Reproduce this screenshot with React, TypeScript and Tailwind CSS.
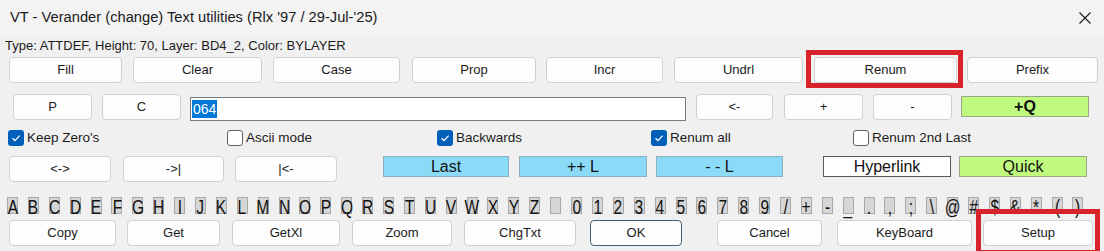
const chars = [
  "A", "B", "C", "D", "E", "F", "G", "H", "I", "J", "K", "L", "M", "N", "O", "P", "Q", "R", "S", "T", "U", "V", "W", "X", "Y", "Z",
  "", "0", "1", "2", "3", "4", "5", "6", "7", "8", "9", "/", "+", "-", "_", ".", ",", ";", "\\", "@", "#", "$", "&", "*", "(", ")",
];

function Btn({ label, className }: { label: string; className: string }) {
  return (
    <button
      className={
        "shrink-0 h-[26px] rounded-[4px] border border-[#d0d0d0] bg-[#fdfdfd] text-[13px] text-[#1b1b1b] " +
        className
      }
    >
      {label}
    </button>
  );
}

function Check({ label, checked, className }: { label: string; checked?: boolean; className: string }) {
  return (
    <div className={"flex items-center gap-[3px] " + className}>
      {checked ? (
        <span className="w-[16px] h-[16px] rounded-[3px] bg-[#005fb8] flex items-center justify-center">
          <svg width="10" height="10" viewBox="0 0 10 10">
            <path d="M1.5 5.2 L4 7.6 L8.6 2.6" fill="none" stroke="white" strokeWidth="1.3" />
          </svg>
        </span>
      ) : (
        <span className="w-[16px] h-[16px] rounded-[3px] bg-white border border-[#5f5f5f]" />
      )}
      <span className="text-[13.5px] text-[#1b1b1b]">{label}</span>
    </div>
  );
}

function Flat({ label, className }: { label: string; className: string }) {
  return (
    <div
      className={
        "shrink-0 h-[21px] flex items-center justify-center border text-[16px] leading-none text-[#111] " + className
      }
    >
      {label}
    </div>
  );
}

export default function App() {
  return (
    <div
      className="relative w-[1104px] h-[251px] overflow-hidden bg-[#f0f0f0] flex flex-col"
      style={{ fontFamily: '"Liberation Sans", Arial, sans-serif' }}
    >
      {/* title bar */}
      <div className="h-[35px] bg-[#f3f3f3] flex items-center justify-between pl-[10px] pr-[12px]">
        <span className="text-[14.7px] text-[#1a1a1a]">VT - Verander (change) Text utilities (Rlx '97 / 29-Jul-'25)</span>
        <svg width="14" height="14" viewBox="0 0 14 14">
          <path d="M1.5 1.5 L12.5 12.5 M12.5 1.5 L1.5 12.5" stroke="#1a1a1a" strokeWidth="1.1" />
        </svg>
      </div>

      <div className="h-[22px] leading-[22px] pl-[5px] text-[13px] text-[#1b1b1b]">
        Type: ATTDEF, Height: 70, Layer: BD4_2, Color: BYLAYER
      </div>

      {/* row 1 */}
      <div className="flex h-[26px]">
        <Btn label="Fill" className="ml-[9px] w-[113px]" />
        <Btn label="Clear" className="ml-[11px] w-[129px]" />
        <Btn label="Case" className="ml-[11px] w-[127px]" />
        <Btn label="Prop" className="ml-[12px] w-[124px]" />
        <Btn label="Incr" className="ml-[10px] w-[117px]" />
        <Btn label="Undrl" className="ml-[11px] w-[129px]" />
        <Btn label="Renum" className="ml-[11px] w-[143px]" />
        <Btn label="Prefix" className="ml-[10px] w-[131px]" />
      </div>

      {/* row 2 */}
      <div className="flex items-start h-[27px] mt-[11px]">
        <Btn label="P" className="ml-[13px] w-[79px]" />
        <Btn label="C" className="ml-[10px] w-[79px]" />
        <div className="ml-[9px] mt-[3px] w-[496px] h-[24px] bg-white border border-[#7a7a7a] flex items-center pl-[1px]">
          <span className="bg-[#0078d7] text-white text-[14px] leading-[18px] px-[1px]">064</span>
        </div>
        <Btn label="<-" className="ml-[10px] w-[77px]" />
        <Btn label="+" className="ml-[11px] w-[79px]" />
        <Btn label="-" className="ml-[10px] w-[79px]" />
        <Flat label="+Q" className="ml-[9px] mt-[2px] w-[128px] bg-[#c0fb80] border-[#9aa88a] font-bold" />
      </div>

      {/* row 3 */}
      <div className="flex h-[16px] mt-[9px]">
        <Check label="Keep Zero's" checked className="ml-[8px] w-[219px]" />
        <Check label="Ascii mode" className="w-[210px]" />
        <Check label="Backwards" checked className="w-[214px]" />
        <Check label="Renum all" checked className="w-[202px]" />
        <Check label="Renum 2nd Last" className="" />
      </div>

      {/* row 4 */}
      <div className="flex items-start h-[25px] mt-[10px]">
        <Btn label="<->" className="ml-[9px] w-[102px] h-[25px]" />
        <Btn label="->|" className="ml-[12px] w-[101px] h-[25px]" />
        <Btn label="|<-" className="ml-[11px] w-[102px] h-[25px]" />
        <Flat label="Last" className="ml-[46px] w-[126px] bg-[#8bdbf8] border-[#8cb0bf]" />
        <Flat label="++ L" className="ml-[10px] w-[128px] bg-[#8bdbf8] border-[#8cb0bf]" />
        <Flat label="- - L" className="ml-[9px] w-[127px] bg-[#8bdbf8] border-[#8cb0bf]" />
        <Flat label="Hyperlink" className="ml-[40px] w-[128px] bg-white border-[#5a5a5a]" />
        <Flat label="Quick" className="ml-[8px] w-[128px] bg-[#c0fb80] border-[#9aa88a]" />
      </div>

      {/* row 5: character keys */}
      <div className="flex justify-between h-[17px] mt-[16px] ml-[7px] w-[1077px]">
        {chars.map((c, i) => (
          <div
            key={i}
            className="w-[11px] h-[17px] bg-[#d6d6d6] border border-[#a9a9a9] flex items-center justify-center overflow-visible"
          >
            <span
              className="text-[21px] leading-none text-[#111] whitespace-pre scale-x-[0.74] mt-[1px]"
              style={{ fontFamily: '"Liberation Sans Narrow", "Liberation Sans", Arial, sans-serif' }}
            >
              {c}
            </span>
          </div>
        ))}
      </div>

      {/* row 6 */}
      <div className="flex h-[26px] mt-[6px]">
        <Btn label="Copy" className="ml-[9px] w-[107px]" />
        <Btn label="Get" className="ml-[11px] w-[93px]" />
        <Btn label="GetXl" className="ml-[12px] w-[108px]" />
        <Btn label="Zoom" className="ml-[12px] w-[100px]" />
        <Btn label="ChgTxt" className="ml-[12px] w-[112px]" />
        <Btn label="OK" className="ml-[14px] w-[92px] !border-[#3d5f74]" />
        <Btn label="Cancel" className="ml-[35px] w-[105px]" />
        <Btn label="KeyBoard" className="ml-[15px] w-[135px]" />
        <Btn label="Setup" className="ml-[11px] w-[110px]" />
      </div>

      {/* red highlight boxes */}
      <div className="absolute left-[806px] top-[50px] w-[157px] h-[38px] border-[5px] border-[#d8232a]" />
      <div className="absolute left-[976px] top-[209px] w-[124px] h-[46px] border-[5px] border-[#d8232a]" />
    </div>
  );
}
